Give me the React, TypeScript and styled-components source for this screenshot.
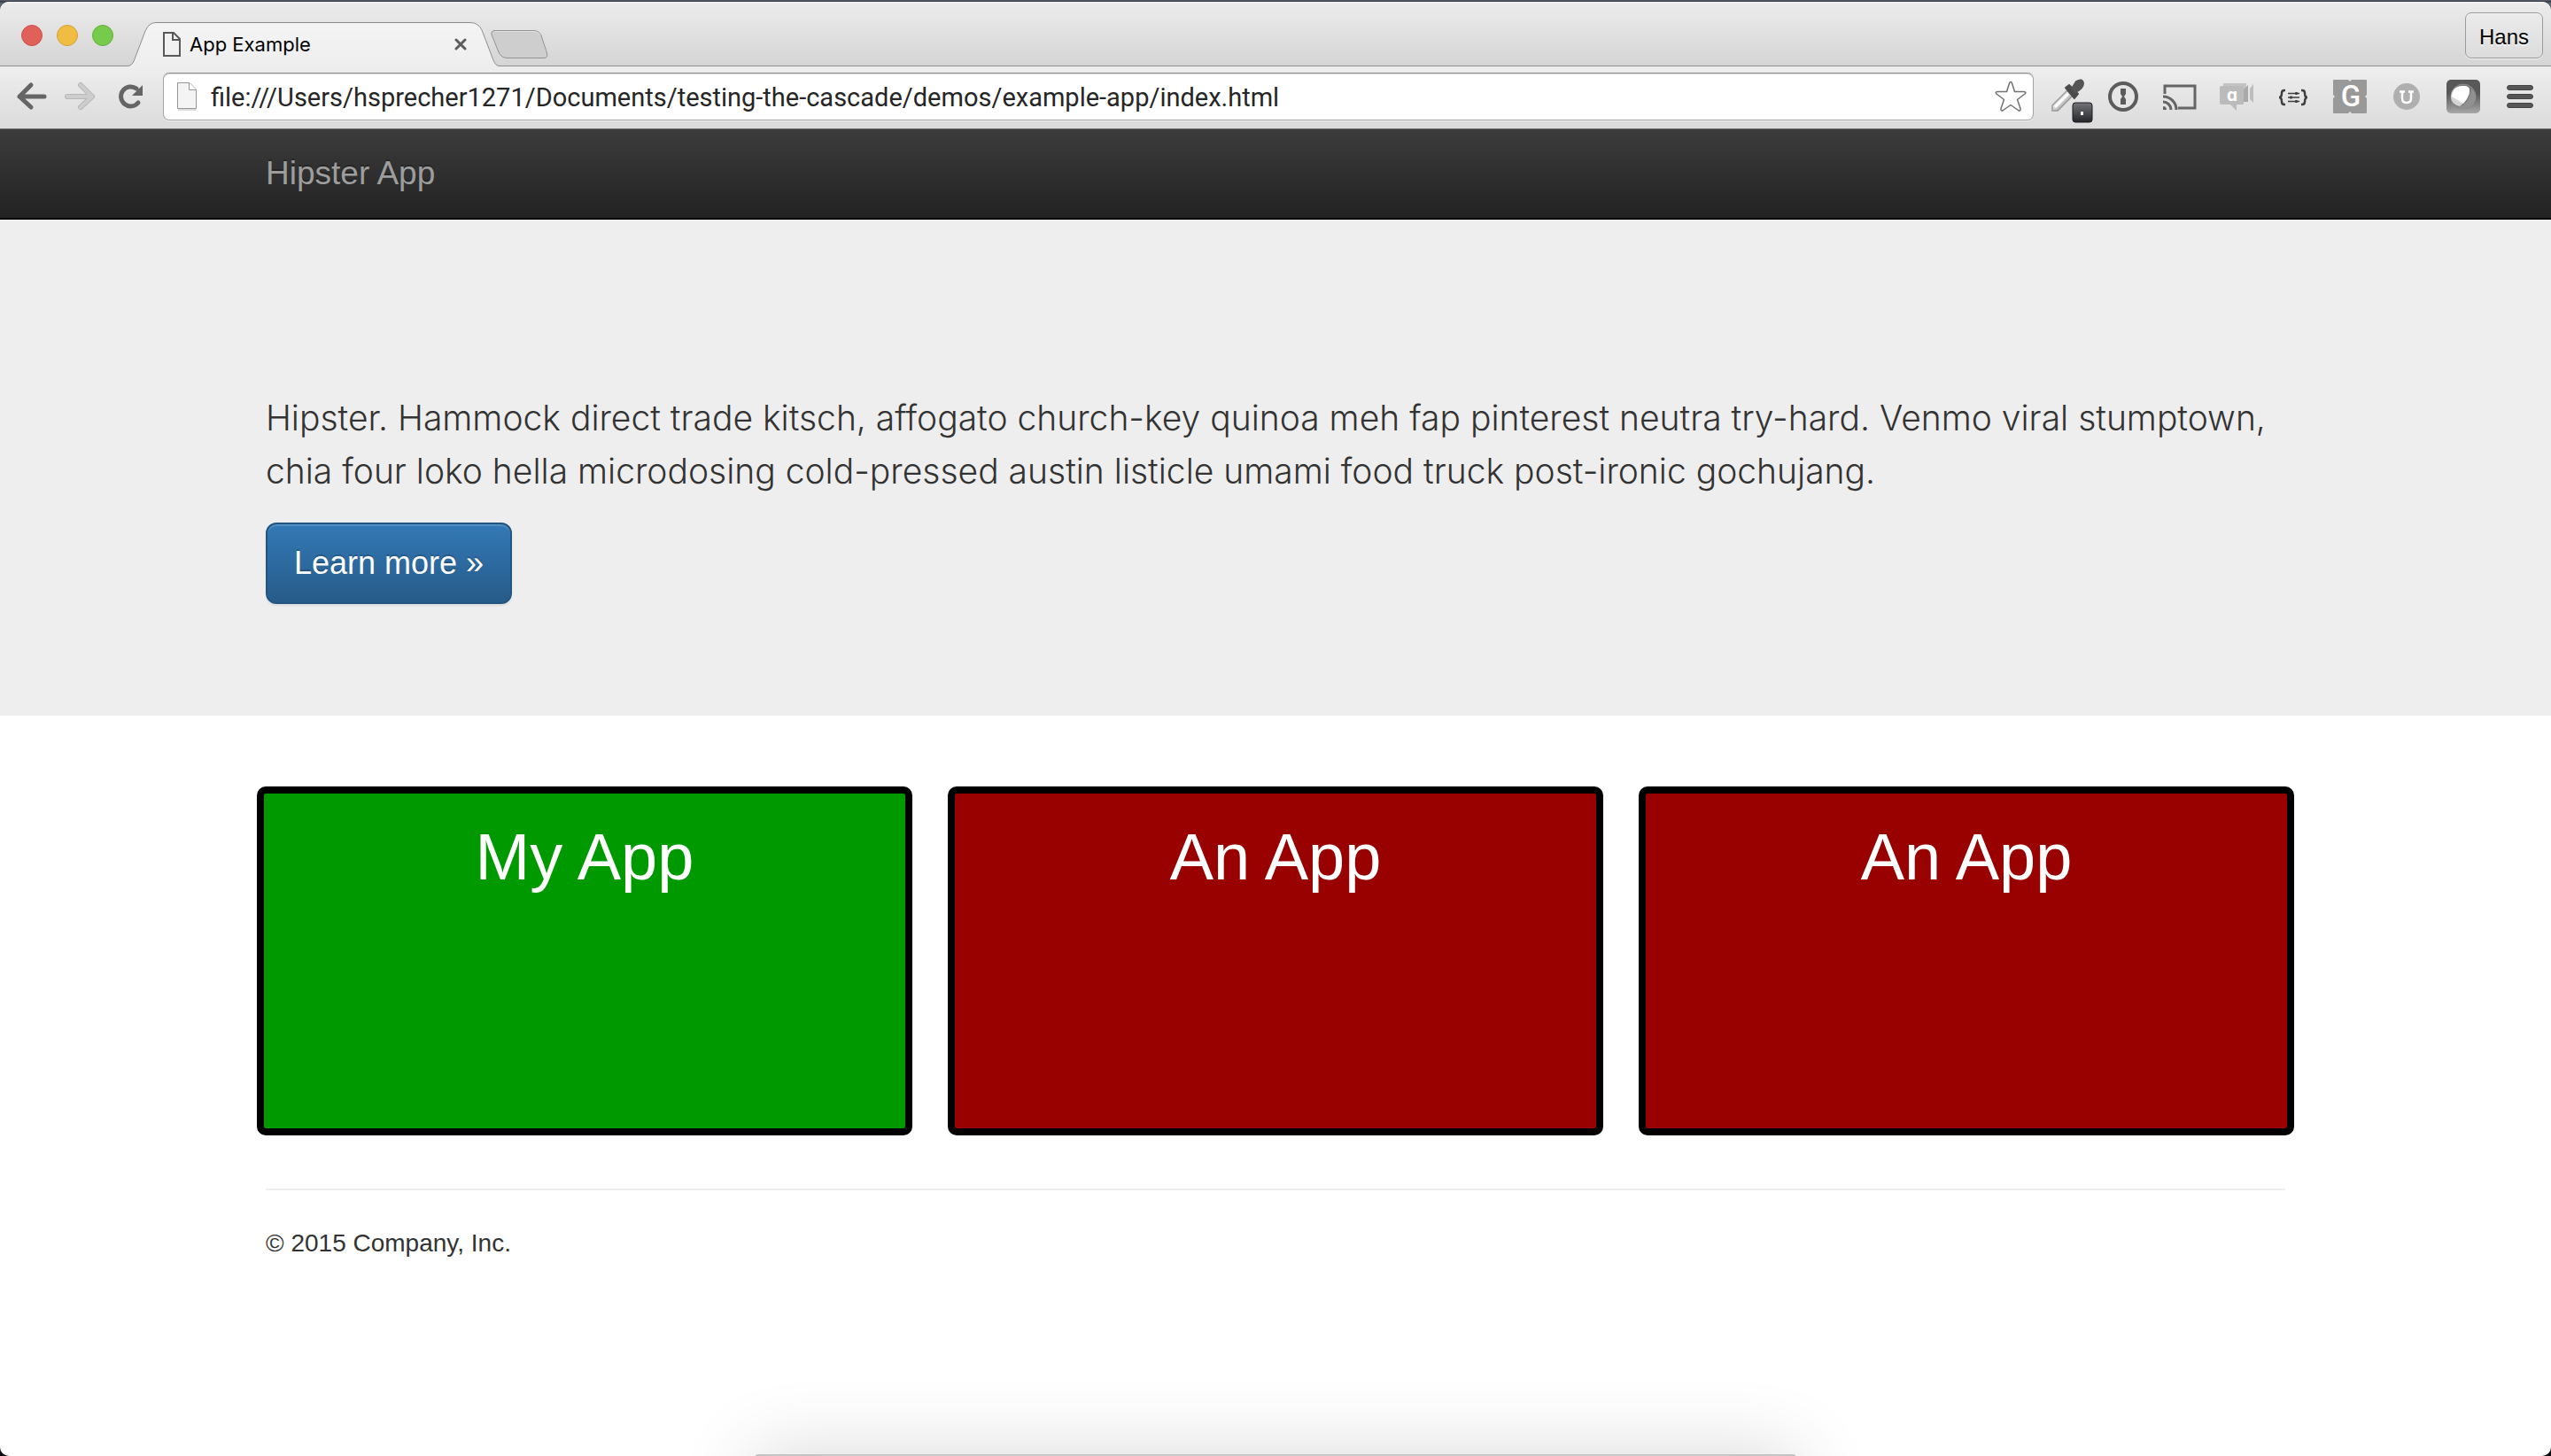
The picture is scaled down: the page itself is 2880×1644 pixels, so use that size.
import React from "react";
import styled, { createGlobalStyle } from "styled-components";

const GlobalStyle = createGlobalStyle`
  *, *::before, *::after { box-sizing: border-box; }
  body { margin: 0; background: #0c0d10; }
  button { margin: 0; padding: 0; border: 0; background: none; font: inherit; color: inherit; cursor: pointer; }
`;

const helvetica = `"Helvetica Neue", "Liberation Sans", Arial, sans-serif`;

/* ---------- window ---------- */

const Desktop = styled.div`
  position: relative;
  display: flex;
  flex-direction: column;
  min-height: 100vh;
  padding-top: 2px;
  overflow: hidden;
  background: linear-gradient(#626b78 0, #2b2f38 2px, #5b6673 3px, #5b6673 40px, #0c0d10 60px);
  font-family: ${helvetica};
`;

const BrowserWindow = styled.div`
  flex: 1;
  display: flex;
  flex-direction: column;
  overflow: hidden;
  border-radius: 10px;
  background: #fff;
`;

const DockEdge = styled.div`
  position: absolute;
  bottom: -200px;
  left: 50%;
  width: 1176px;
  height: 202px;
  margin-left: -588px;
  border-radius: 4px;
  background: #c4c4c4;
  box-shadow: 0 0 88px rgba(0, 0, 0, 0.16);
`;

/* ---------- title bar ---------- */

const TitleBar = styled.div`
  display: flex;
  height: 73px;
  background: linear-gradient(#f6f6f6 0, #ebebeb 2px, #d5d5d5 72px, #8e8e8e 72px);
`;

const TrafficLights = styled.div`
  display: flex;
  align-items: center;
  gap: 16px;
  width: 140px;
  height: 76px;
  padding-left: 24px;
`;

const Light = styled.button<{ $fill: string; $edge: string }>`
  width: 24px;
  height: 24px;
  border: 1px solid ${(p) => p.$edge};
  border-radius: 50%;
  background: ${(p) => p.$fill};
`;

const Tab = styled.div`
  position: relative;
  display: flex;
  align-items: center;
  width: 426px;
  height: 50px;
  margin-top: 23px;
  padding: 0 39px 0 44px;
`;

const TabShape = styled.svg`
  position: absolute;
  inset: 0;
`;

const TabTitle = styled.span`
  position: relative;
  flex: 1;
  padding-left: 10px;
  font: 22px/30px Inter, sans-serif;
  color: #000;
`;

const TabIcon = styled.svg`
  position: relative;
  display: block;
`;

const CloseTab = styled.button`
  position: relative;
  display: flex;
`;

const NewTab = styled.button`
  align-self: flex-start;
  display: flex;
  margin: 31px auto 0 -12px;
`;

const ProfileButton = styled.button`
  height: 52px;
  margin: 12px 9px 0 0;
  padding: 4px 15px 0;
  border: 1px solid #9b9b9b;
  border-radius: 7px;
  background: linear-gradient(#ebebeb, #dcdcdc);
  box-shadow: 0 1px 0 #f3f3f3, inset 0 1px 0 #f3f3f3;
  font: 24px/28px ${helvetica};
  color: #000;
  text-shadow: 0 2px 0 #f2f2f2;
`;

/* ---------- toolbar ---------- */

const Toolbar = styled.div`
  display: flex;
  height: 71px;
  padding: 7px 2px 0 8px;
  border-bottom: 1px solid #6f6f6f;
  background: linear-gradient(#eeeeee, #dbdbdb);
`;

const NavButton = styled.button`
  display: flex;
  width: 56px;
  height: 56px;
`;

const ExtensionButton = styled.button`
  display: flex;
  width: 64px;
  height: 56px;
`;

const AddressBar = styled.label`
  flex: 1;
  display: flex;
  align-items: center;
  height: 54px;
  margin: 0 6px 0 8px;
  padding: 0 7px 0 15px;
  border: 1px solid #a3a3a3;
  border-top-color: #8a8a8a;
  border-radius: 7px;
  background: #fff;
  box-shadow: inset 0 1px 1px #d9d9d9, 0 1px 0 #f1f1f1;
`;

const AddressInput = styled.input`
  flex: 1;
  min-width: 0;
  height: 40px;
  padding: 2px 0 0 15px;
  border: 0;
  outline: 0;
  background: none;
  font: 29px/38px Roboto, sans-serif;
  color: #262626;
`;

const StarButton = styled.button`
  display: flex;
`;

/* ---------- page ---------- */

const Container = styled.div`
  width: 100%;
  max-width: 2340px;
  margin: 0 auto;
  padding: 0 30px;
`;

const Navbar = styled.nav`
  border-bottom: 2px solid #080808;
  background: linear-gradient(#3c3c3c, #222);
`;

const Brand = styled.a`
  display: inline-block;
  padding: 30px 0;
  font-size: 37px;
  line-height: 40px;
  color: #9d9d9d;
  text-decoration: none;
  text-shadow: 0 -2px 0 rgba(0, 0, 0, 0.25);
  vertical-align: top;
`;

const Jumbotron = styled.header`
  padding: 194px 0 126px;
  background: #eee;
`;

const Lead = styled.p`
  margin: 0 0 28px;
  font: 300 39px/60px Inter, sans-serif;
  color: #333;
`;

const PrimaryButton = styled.button`
  display: block;
  height: 92px;
  padding: 0 30px;
  border: 2px solid #245580;
  border-radius: 12px;
  background: linear-gradient(#337ab7, #265a88) border-box;
  box-shadow: inset 0 2px 0 rgba(255, 255, 255, 0.15), 0 2px 2px rgba(0, 0, 0, 0.075);
  font-size: 36px;
  line-height: 48px;
  color: #fff;
  text-shadow: 0 -2px 0 rgba(0, 0, 0, 0.2);
`;

const Cards = styled.div`
  display: grid;
  grid-template-columns: repeat(3, 1fr);
  gap: 40px;
  margin: 80px -10px 60px;
`;

const Card = styled.section<{ $color: string }>`
  height: 394px;
  padding-top: 32px;
  border: 8px solid #000;
  border-radius: 10px;
  background: ${(p) => p.$color};
`;

const CardTitle = styled.h2`
  margin: 0;
  font-size: 74px;
  font-weight: 400;
  line-height: 80px;
  text-align: center;
  color: #fff;
`;

const Footer = styled.footer`
  padding: 40px 0;
  border-top: 2px solid #eee;
  font-size: 28px;
  line-height: 40px;
  color: #333;
`;

/* ---------- drawings ---------- */

const arrow = "M14 28 L27 15 M14 28 L27 40 M14 28 H42";

const lights = [
  { label: "Close", fill: "#e0605a", edge: "#cc5049" },
  { label: "Minimise", fill: "#f0bc41", edge: "#d3a035" },
  { label: "Zoom", fill: "#76cb4d", edge: "#62ad3c" },
];

const extensions: { label: string; art: React.ReactNode }[] = [
  {
    label: "Eyedropper",
    art: (
      <>
        <path d="M15 43 L15 37 L32 20 L38 26 L21 43 Z" fill="url(#glass)" stroke="#999" strokeWidth="1.5" />
        <path d="M18 39 L33 24" stroke="#fff" strokeWidth="3" />
        <path d="M30 17 L34 14 L44 24 L40 29 Z" fill="#4c4c4c" stroke="#4c4c4c" strokeWidth="2" strokeLinejoin="round" />
        <path d="M37 18 L42 10 Q49 6 50 12 Q50 18 41 22 Z" fill="#555" stroke="#555" strokeWidth="2" />
        <rect x="38" y="34" width="22" height="22" rx="3" fill="url(#badge)" stroke="#1c1c20" />
        <rect x="47" y="44" width="3" height="4" fill="#fff" />
      </>
    ),
  },
  {
    label: "Passwords",
    art: (
      <>
        <circle cx="31" cy="27" r="15" fill="#e6e6e6" stroke="#5c5c5c" strokeWidth="4" />
        <path d="M28 18 h6 v6 l-2 3 l2 3 v6 h-6 v-6 l2 -3 l-2 -3 z" fill="#5c5c5c" />
      </>
    ),
  },
  {
    label: "Cast",
    art: (
      <g fill="none" stroke="#656565" strokeWidth="3">
        <path d="M14 24 V15 H48 V40 H29" />
        <path d="M12 27 A15 15 0 0 1 27 42 M12 33 A9 9 0 0 1 21 42" />
        <path d="M12 38 A4 4 0 0 1 16 42 H12 Z" fill="#656565" stroke="none" />
      </g>
    ),
  },
  {
    label: "Video chat",
    art: (
      <>
        <path d="M16 12 H42 V32 H16 Z" fill="#c4c4c4" />
        <path d="M39 19 L44 14 V33 H39 Z" fill="#a9a9a9" />
        <path d="M46 18 L50 13 V34 L46 30 Z" fill="#bdbdbd" />
        <path d="M14 15 H37 Q39 15 39 17 V36 H31 V43 L24 36 H14 Q12 36 12 34 V17 Q12 15 14 15 Z" fill="#bbb" />
        <text x="26" y="32" fontFamily="Inter, sans-serif" fontWeight="700" fontSize="19" fill="#fff" textAnchor="middle">ɑ</text>
      </>
    ),
  },
  {
    label: "Code settings",
    art: (
      <>
        <g fill="none" stroke="#3f3f3f" strokeWidth="2.5">
          <path d="M22 20 H21 Q18 20 18 23 Q18 28 15 28 Q18 28 18 33 Q18 36 21 36 H22" />
          <path d="M40 20 H41 Q44 20 44 23 Q44 28 47 28 Q44 28 44 33 Q44 36 41 36 H40" />
        </g>
        <path d="M25 23.500 H38 M25 28 H38 M25 32.500 H38" stroke="#3f3f3f" strokeWidth="1.5" />
        <path d="M34.500 22 V25 M28.500 26.500 V29.500 M34.500 31 V34" stroke="#3f3f3f" strokeWidth="2.5" />
      </>
    ),
  },
  {
    label: "G",
    art: (
      <>
        <rect x="12" y="8" width="38" height="38" rx="1" fill="#999" />
        <path d="M29 8 h4 l-2 2 z M29 46 h4 l-2 -2 z M12 25 v4 l2 -2 z M50 25 v4 l-2 -2 z" fill="#e5e5e5" />
        <text x="32" y="38" fontFamily="Roboto, sans-serif" fontWeight="500" fontSize="33" fill="#fff" textAnchor="middle">G</text>
      </>
    ),
  },
  {
    label: "U",
    art: (
      <>
        <circle cx="31" cy="27" r="15" fill="#afafaf" />
        <path d="M23 21.500 H29 M33 21.500 H39 M26 22 V29 Q26 34 31 34 Q36 34 36 29 V22" fill="none" stroke="#fff" strokeWidth="2.5" />
      </>
    ),
  },
  {
    label: "Sphere",
    art: (
      <>
        <rect x="12" y="8" width="38" height="38" rx="5" fill="url(#tile)" />
        <circle cx="31" cy="27" r="14" fill="#777" stroke="#8d8d8d" />
        <path d="M45 27 A14 14 0 0 1 24 39 Q38 36 40 18 Q44 21 45 27 Z" fill="#919191" />
        <path d="M17 27 Q18 15 31 15 Q38 15 38 20 Q38 30 27 38 Q17 36 17 27 Z" fill="#d4d4d4" />
        <path d="M18 27 Q19 15 31 15 Q38 15 38 20 Q38 27 31 35 Z" fill="#fff" />
      </>
    ),
  },
  {
    label: "Menu",
    art: (
      <g fill="#565656" stroke="#444" strokeWidth="1">
        <rect x="16.5" y="14.5" width="29" height="5" rx="2.5" />
        <rect x="16.5" y="24.5" width="29" height="5" rx="2.5" />
        <rect x="16.5" y="34.5" width="29" height="5" rx="2.5" />
      </g>
    ),
  },
];

const cards = [
  { title: "My App", color: "#009900" },
  { title: "An App", color: "#990000" },
  { title: "An App", color: "#990000" },
];

function Gradients() {
  return (
    <defs>
      <linearGradient id="glass" x1="0" y1="0" x2="1" y2="1">
        <stop offset="0.3" stopColor="#f8f8f8" />
        <stop offset="0.7" stopColor="#aaa" />
      </linearGradient>
      <linearGradient id="badge" x1="0" y1="0" x2="0" y2="1">
        <stop offset="0" stopColor="#74757a" />
        <stop offset="1" stopColor="#242529" />
      </linearGradient>
      <linearGradient id="tile" x1="0" y1="0" x2="0" y2="1">
        <stop offset="0.4" stopColor="#585858" />
        <stop offset="1" stopColor="#a8a8a8" />
      </linearGradient>
    </defs>
  );
}

function Tabs() {
  return (
    <TitleBar>
      <TrafficLights>
        {lights.map((l) => (
          <Light key={l.label} aria-label={l.label} $fill={l.fill} $edge={l.edge} />
        ))}
      </TrafficLights>
      <Tab>
        <TabShape width="426" height="50" viewBox="0 0 426 50" aria-hidden="true">
          <defs>
            <linearGradient id="tab" x1="0" y1="0" x2="0" y2="1">
              <stop offset="0" stopColor="#f4f4f4" />
              <stop offset="1" stopColor="#eeeeee" />
            </linearGradient>
          </defs>
          <path
            d="M0 49.5 H4 Q9 49.5 11.500 43 L24 10 Q28 0.500 36 0.500 H391 Q400 0.500 404 9 L417 43 Q419.500 49.500 424 49.500 H426 V51 H0 Z"
            fill="url(#tab)"
          />
          <path
            d="M0 49.5 H4 Q9 49.5 11.500 43 L24 10 Q28 0.500 36 0.500 H391 Q400 0.500 404 9 L417 43 Q419.500 49.500 424 49.500 H426"
            fill="none"
            stroke="#8e8e8e"
          />
        </TabShape>
        <TabIcon width="20" height="28" viewBox="0 0 20 28" fill="none" stroke="#595959" strokeWidth="2" aria-hidden="true">
          <path d="M1 1 H12 L19 8 V27 H1 Z M11 1 V9 H19" />
        </TabIcon>
        <TabTitle>App Example</TabTitle>
        <CloseTab aria-label="Close tab">
          <svg width="14" height="14" viewBox="0 0 14 14" stroke="#5c5c5c" strokeWidth="3" strokeLinecap="round">
            <path d="M2 2 L12 12 M12 2 L2 12" />
          </svg>
        </CloseTab>
      </Tab>
      <NewTab aria-label="New tab">
        <svg width="66" height="35" viewBox="0 0 66 35">
          <path
            d="M5 1.500 H48 Q54.500 1.500 57 7 L63.500 27 Q65 32.500 60 32.500 H19 Q12 32.500 9 26 L1 6 Q0 1.500 5 1.500 Z"
            fill="#cecece"
            stroke="#929292"
          />
          <path d="M5 2.500 H48 Q53.500 2.500 56 7" fill="none" stroke="#e3e3e3" />
        </svg>
      </NewTab>
      <ProfileButton>Hans</ProfileButton>
    </TitleBar>
  );
}

function Tools() {
  return (
    <Toolbar>
      <NavButton aria-label="Back">
        <svg width="56" height="56" fill="none" stroke="#656565" strokeWidth="5" strokeLinecap="round" strokeLinejoin="round">
          <path d={arrow} transform="translate(0 -1)" />
        </svg>
      </NavButton>
      <NavButton aria-label="Forward" disabled>
        <svg width="56" height="56" fill="none" strokeLinecap="round" strokeLinejoin="round">
          <g transform="matrix(-1 0 0 1 54 -1)">
            <path d={arrow} stroke="#b8b8b8" strokeWidth="6" />
            <path d={arrow} stroke="#cdcdcd" strokeWidth="4" />
          </g>
        </svg>
      </NavButton>
      <NavButton aria-label="Reload">
        <svg width="56" height="56" fill="none" stroke="#656565" strokeWidth="5" strokeLinecap="round">
          <path d="M36 34 A11 11 0 1 1 34 18" />
          <path d="M41 14 V26 H29 Z" fill="#656565" stroke="none" />
        </svg>
      </NavButton>
      <AddressBar>
        <svg width="23" height="34" viewBox="0 0 23 34" aria-hidden="true">
          <path d="M1 32 H22" stroke="#ddd" strokeWidth="2" />
          <path d="M0.5 1.500 H14 L21.500 9 V30.500 H0.500 Z" fill="#f4f4f4" stroke="#969696" />
          <path d="M13.500 1.500 V9.500 H21.500" fill="#fff" stroke="#969696" />
        </svg>
        <AddressInput
          aria-label="Address"
          defaultValue="file:///Users/hsprecher1271/Documents/testing-the-cascade/demos/example-app/index.html"
        />
        <StarButton aria-label="Bookmark">
          <svg width="36" height="36" viewBox="0 0 36 36" fill="#fff" stroke="#707070" strokeWidth="1.500" strokeLinejoin="round">
            <path d="M18 1.500 Q19 1.500 19.500 3 L22.500 12.500 L33 12.500 Q36 13 34 15 L25.500 21.500 L29 31.500 Q29.500 35 26.500 33.500 L18 27.500 L9.500 33.500 Q6.500 35 7 31.500 L10.500 21.500 L2 15 Q0 13 3 12.500 L13.500 12.500 L16.500 3 Q17 1.500 18 1.500 Z" />
          </svg>
        </StarButton>
      </AddressBar>
      {extensions.map((e) => (
        <ExtensionButton key={e.label} aria-label={e.label}>
          <svg width="64" height="57" viewBox="0 0 64 57">
            {e.label === "Eyedropper" && <Gradients />}
            {e.art}
          </svg>
        </ExtensionButton>
      ))}
    </Toolbar>
  );
}

export default function App() {
  return (
    <>
      <GlobalStyle />
      <Desktop>
        <BrowserWindow>
          <Tabs />
          <Tools />
          <Navbar>
            <Container>
              <Brand href="#">Hipster App</Brand>
            </Container>
          </Navbar>
          <Jumbotron>
            <Container>
              <Lead>
                Hipster. Hammock direct trade kitsch, affogato church-key quinoa meh fap pinterest neutra try-hard. Venmo
                viral stumptown, chia four loko hella microdosing cold-pressed austin listicle umami food truck
                post-ironic gochujang.
              </Lead>
              <PrimaryButton>Learn more »</PrimaryButton>
            </Container>
          </Jumbotron>
          <Container as="main">
            <Cards>
              {cards.map((c, i) => (
                <Card key={i} $color={c.color}>
                  <CardTitle>{c.title}</CardTitle>
                </Card>
              ))}
            </Cards>
            <Footer>© 2015 Company, Inc.</Footer>
          </Container>
        </BrowserWindow>
        <DockEdge />
      </Desktop>
    </>
  );
}
